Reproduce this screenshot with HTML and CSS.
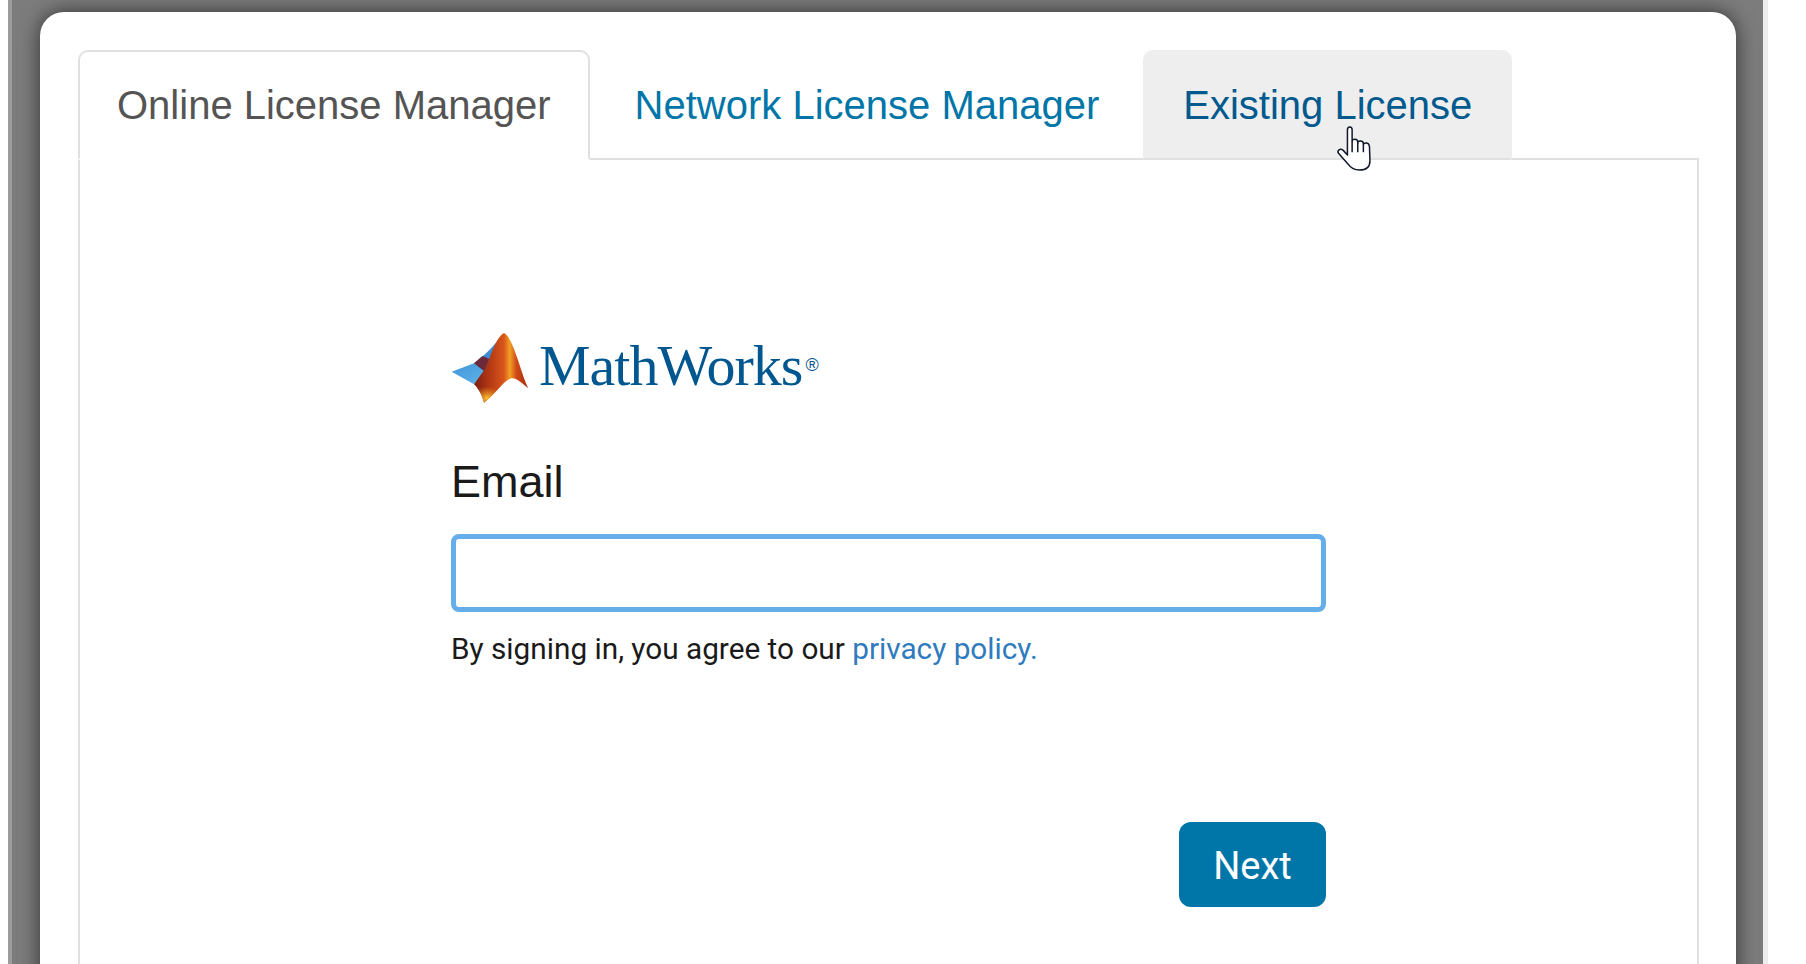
FILE: index.html
```html
<!DOCTYPE html>
<html lang="en">
<head>
    <meta charset="UTF-8" />
    <title>MathWorks License Manager</title>
    <link rel="stylesheet" href="styles.css">
</head>
<body>
    <div class="backdrop">
        <div class="modal">
            <div class="tabs">
                <a href="#" class="tab active">Online License Manager</a>
                <a href="#" class="tab network">Network License Manager</a>
                <a href="#" class="tab hover">Existing License</a>
            </div>
            <div class="panel">
                <form class="form">
                    <div class="logo">
                        <svg class="membrane" viewBox="0 0 270 255" width="90" height="85">
                            <defs>
                                <linearGradient id="sheet" x1="0" y1="0" x2="1" y2="1">
                                    <stop offset="0" stop-color="#3f97dc"/>
                                    <stop offset="1" stop-color="#62b2e6"/>
                                </linearGradient>
                                <linearGradient id="peak" x1="0" y1="0" x2="1" y2="0">
                                    <stop offset="0" stop-color="#7c1c12"/>
                                    <stop offset="0.3" stop-color="#b63a14"/>
                                    <stop offset="0.55" stop-color="#d8561a"/>
                                    <stop offset="0.66" stop-color="#f3a026"/>
                                    <stop offset="0.78" stop-color="#cf4a17"/>
                                    <stop offset="1" stop-color="#a82c0e"/>
                                </linearGradient>
                                <radialGradient id="foot" cx="0.5" cy="0.8" r="0.55">
                                    <stop offset="0" stop-color="#fbc231"/>
                                    <stop offset="1" stop-color="#f39a20" stop-opacity="0"/>
                                </radialGradient>
                            </defs>
                            <path d="M8 140L75 115L112 135L75 178Z" fill="url(#sheet)"/>
                            <path d="M75 115C105 92 135 65 163 24C140 60 125 100 108 140Z" fill="#3b8ed2"/>
                            <path d="M75 115L100 93L128 105L108 140Z" fill="#6a2a3a"/>
                            <path d="M165 24C140 38 126 92 108 132L75 178C90 192 100 214 105 233C140 208 168 160 190 160C205 160 224 180 238 190C214 140 192 36 165 24Z" fill="url(#peak)"/>
                            <path d="M75 178C90 192 100 214 105 233C125 218 142 198 155 182C125 170 100 172 85 168Z" fill="url(#foot)"/>
                        </svg>
                        <span class="wordmark">MathWorks<sup>®</sup></span>
                    </div>
                    <label class="label" for="email">Email</label>
                    <input class="input" id="email" type="text">
                    <p class="note">By signing in, you agree to our <a href="#">privacy policy.</a></p>
                    <div class="actions">
                        <button class="next" type="button">Next</button>
                    </div>
                </form>
            </div>
        </div>
    </div>
    <svg class="cursor" viewBox="0 0 36 48" width="34" height="45">
        <path d="M11 31V4Q11 1 13.500 1Q16 1 16 4V16Q16 14 19 14Q22 14 22 17V18Q22 16 25 16Q28 16 28 19V20Q28 18 31 18Q34 18 34.500 22L35 37Q35 47 24 47Q16 47 12 41L1.500 29Q0 27 2 25.500Q4 24 6.500 26Z" fill="#fff" stroke="#10182a" stroke-width="1.600" stroke-linejoin="round"/>
        <path d="M16 16V28M22 18V28M28 20V28" fill="none" stroke="#10182a" stroke-width="1.600"/>
    </svg>
</body>
</html>
```

FILE: styles.css
```css
*{
    box-sizing:border-box;
    padding:0;
    margin:0;
}
html,body{
    height:100%;
    overflow:hidden;
    background:#fff;
}
body{
    font-family:"Liberation Sans",Arial,sans-serif;
    padding:0 38px 0 8px;
}
.backdrop{
    height:964px;
    padding:12px 27px 0 28px;
    background:#7c7c7c;
    border-left:4px solid #9c9c9c;
    border-right:5px solid #ededed;
    overflow:hidden;
}
.modal{
    height:1000px;
    padding:38px 37px 0 38px;
    background:#fff;
    border-radius:24px 24px 0 0;
    box-shadow:0 0 20px rgba(0,0,0,.6);
}
.tabs{
    display:flex;
    gap:5px;
    margin-bottom:-2px;
    position:relative;
}
.tab{
    height:110px;
    padding:0 38px;
    border:2px solid transparent;
    border-radius:10px 10px 0 0;
    font-size:40px;
    line-height:107px;
    color:#0076a8;
    text-decoration:none;
}
.tab.active{
    padding:0 37px;
    color:#545454;
    background:#fff;
    border-color:#e0e0e0;
    border-bottom-color:#fff;
}
.tab.network{
    padding-right:37px;
}
.tab.hover{
    color:#005a8e;
    background:#eee;
    border-bottom-color:#e0e0e0;
}
.panel{
    height:900px;
    padding:172px 0 0 371px;
    border:2px solid #e0e0e0;
}
.form{
    width:875px;
}
.logo{
    display:flex;
    align-items:center;
    height:70px;
    margin-left:-2px;
}
.membrane{
    flex:none;
}
.wordmark{
    padding-bottom:3px;
    font-family:"Liberation Serif","Times New Roman",serif;
    font-size:58px;
    letter-spacing:-1px;
    color:#00578f;
}
.wordmark sup{
    margin-left:3px;
    font-family:"Liberation Sans",Arial,sans-serif;
    font-size:18px;
    letter-spacing:0;
    vertical-align:14px;
    line-height:0;
}
.label{
    display:block;
    margin-top:52px;
    font-size:45px;
    line-height:56px;
    color:#1a1a1a;
}
.input{
    display:block;
    width:875px;
    height:78px;
    margin-top:24px;
    border:5px solid #66aeea;
    border-radius:8px;
    outline:none;
    background:#fff;
}
.note{
    margin-top:17px;
    font-family:Roboto,sans-serif;
    font-size:29.750px;
    line-height:40px;
    color:#1a1a1a;
}
.note a{
    color:#2f7bbd;
    text-decoration:none;
}
.actions{
    display:flex;
    justify-content:flex-end;
    margin-top:153px;
}
.next{
    width:147px;
    height:85px;
    padding-top:3px;
    border:0;
    border-radius:12px;
    background:#0076a8;
    color:#fff;
    font-family:Roboto,sans-serif;
    font-size:38px;
}
.cursor{
    position:absolute;
    left:1337px;
    top:126px;
}
```
